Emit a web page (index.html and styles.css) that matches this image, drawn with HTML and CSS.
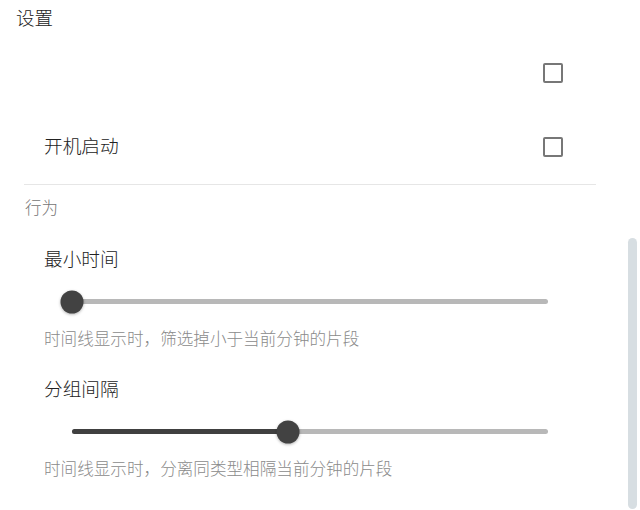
FILE: index.html
```html
<!DOCTYPE html>
<html lang="zh-CN">
<head>
<meta charset="utf-8">
<title>设置</title>
<link rel="stylesheet" href="styles.css">
</head>
<body>
<div class="page">
  <div class="title">设置</div>
  <div class="row"><span class="row-label"></span><span class="checkbox"></span></div>
  <div class="row row-last"><span class="row-label">开机启动</span><span class="checkbox"></span></div>
  <div class="divider"></div>
  <div class="subheader">行为</div>
  <div class="item">
    <div class="item-title">最小时间</div>
    <div class="slider">
      <div class="track">
        <div class="fill" style="width:0%"></div>
        <div class="thumb" style="left:0%"></div>
      </div>
    </div>
    <div class="item-desc">时间线显示时，筛选掉小于当前分钟的片段</div>
  </div>
  <div class="item">
    <div class="item-title">分组间隔</div>
    <div class="slider">
      <div class="track">
        <div class="fill" style="width:45.4%"></div>
        <div class="thumb" style="left:45.4%"></div>
      </div>
    </div>
    <div class="item-desc">时间线显示时，分离同类型相隔当前分钟的片段</div>
  </div>
  <div class="scrollbar"></div>
</div>
</body>
</html>
```
FILE: styles.css
```css
html, body {
  margin: 0;
  padding: 0;
  background: #ffffff;
}
body {
  font-family: "Noto Sans CJK SC", "Noto Sans", sans-serif;
  font-weight: 300;
  color: #222222;
  width: 640px;
  height: 510px;
  overflow: hidden;
}
.page {
  position: relative;
  height: 510px;
}
.title {
  height: 33px;
  padding: 2px 0 0 16px;
  line-height: 31px;
  font-size: 18.5px;
}
.row {
  height: 75px;
  display: flex;
  align-items: center;
  justify-content: space-between;
  padding: 0 77px 0 44px;
}
.row-last {
  height: 74px;
}
.row-label {
  font-size: 18.7px;
  line-height: 24px;
  margin-bottom: 5px;
}
.checkbox {
  width: 16px;
  height: 16px;
  border: 2px solid #777777;
  border-radius: 2px;
}
.divider {
  height: 1px;
  margin: 0 44px 0 24px;
  background: #e6e6e6;
}
.subheader {
  height: 44px;
  padding-bottom: 2px;
  line-height: 44px;
  padding-left: 25px;
  font-size: 16.5px;
  color: #757575;
}
.item {
  padding: 13px 0 11px 44px;
}
.item-title {
  height: 28px;
  line-height: 28px;
  font-size: 18.7px;
}
.slider {
  margin: 14.5px 0 9.5px 16px;
  width: 476px;
  height: 30px;
  padding: 0 12px;
  display: flex;
  align-items: center;
}
.track {
  position: relative;
  flex: 1;
  height: 5px;
  border-radius: 3px;
  background: #b8b8b8;
}
.fill {
  height: 100%;
  border-radius: 3px;
  background: #404040;
}
.thumb {
  position: absolute;
  top: 50%;
  width: 23px;
  height: 23px;
  border-radius: 50%;
  background: #424242;
  transform: translate(-50%, -50%);
  box-shadow: 0 1px 3px rgba(0, 0, 0, 0.3);
}
.item-desc {
  height: 24px;
  line-height: 24px;
  font-size: 16.6px;
  color: #8a8a8a;
}
.scrollbar {
  position: absolute;
  top: 238px;
  right: 3px;
  width: 9px;
  height: 271px;
  border-radius: 5px;
  background: #d7dee2;
}
```
